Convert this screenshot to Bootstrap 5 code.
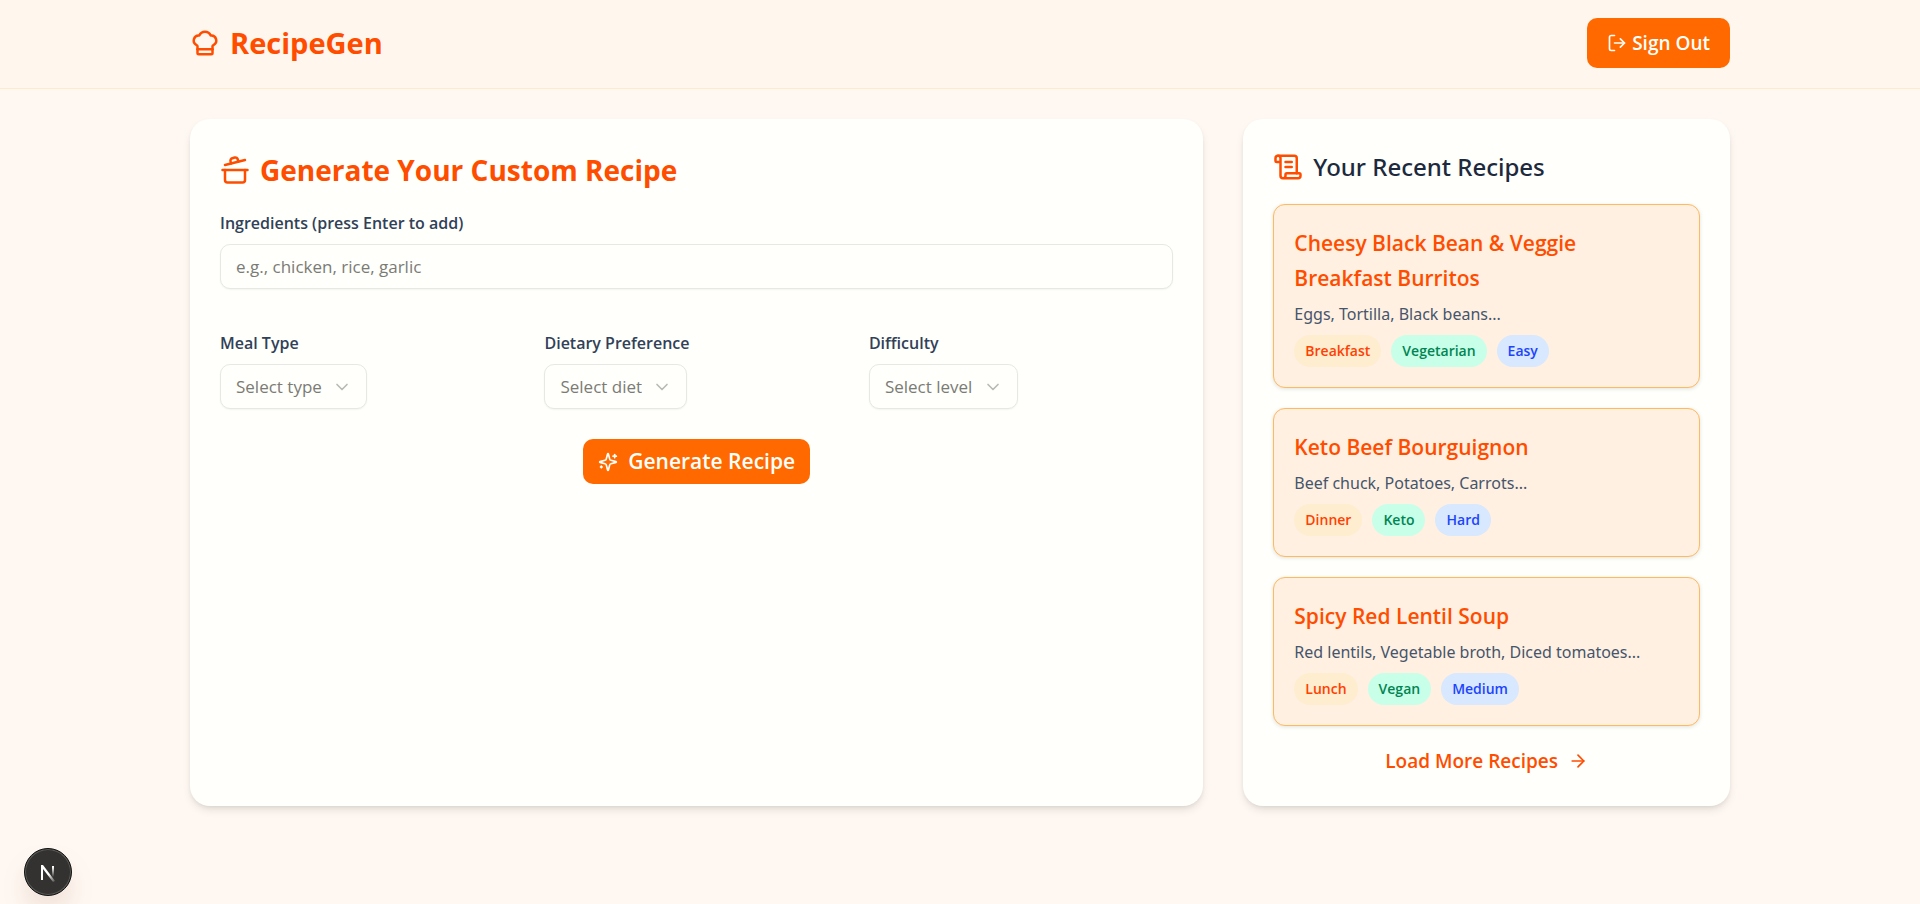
<!DOCTYPE html>
<html lang="en">
<head>
<meta charset="utf-8">
<meta name="viewport" content="width=device-width, initial-scale=1">
<title>RecipeGen</title>
<link href="https://cdn.jsdelivr.net/npm/bootstrap@5.3.0/dist/css/bootstrap.min.css" rel="stylesheet">
<style>
  :root { --flame: #ff4d00; --tangerine: #ff6900; --paper: #fffffb; --slate: #314158; }
  body { font-family: "Open Sans", "Noto Sans", sans-serif; background: #fff8f2; color: #1d293d; }
  svg { flex: none; fill: none; stroke: currentColor; stroke-width: 2; stroke-linecap: round; stroke-linejoin: round; }
  .page-width { max-width: 1580px; padding-inline: 20px; }
  .site-header { background: #fff6ed; border-bottom: 1px solid #ffebcc; padding-block: 18px 20px; }
  .brand { color: var(--flame); font-size: 29px; font-weight: 700; line-height: 42px; gap: 10px; }
  .btn-flame { --bs-btn-color: var(--paper); --bs-btn-bg: var(--tangerine); --bs-btn-hover-color: #fff; --bs-btn-hover-bg: var(--flame);
    --bs-btn-active-bg: var(--flame); --bs-btn-active-color: #fff; --bs-btn-border-width: 0; --bs-btn-border-radius: 10px; font-weight: 600; }
  .btn-signout { font-size: 19px; line-height: 30px; padding: 10px 20px; gap: 5px; }
  .btn-generate { font-size: 21px; line-height: 31px; padding: 7px 15px; gap: 10px; }
  .layout-row { --bs-gutter-x: 40px; row-gap: 30px; padding-top: 30px; }
  .panel { background: var(--paper); border-radius: 20px; padding: 30px; height: 100%;
    box-shadow: 0 5px 8px -1px rgba(0,0,0,.1), 0 2px 5px -2px rgba(0,0,0,.1); }
  .panel-title { color: var(--flame); font-size: 28px; font-weight: 700; line-height: 42px; margin-bottom: 19px; gap: 10px; }
  .side-title { font-family: "Noto Sans", "Open Sans", sans-serif; font-size: 24px; font-weight: 500; line-height: 35px; margin-bottom: 20px; gap: 10px; }
  .side-title svg { color: var(--flame); }
  .form-label { color: var(--slate); font-size: 16px; font-weight: 600; line-height: 26px; margin-bottom: 8px; display: block; }
  .field { background-color: var(--paper); border: 1px solid #e7e7e3; border-radius: 10px; height: 45px; font-size: 17px;
    color: #7b7b76; padding: 0 15px; box-shadow: 0 1px 2px rgba(0,0,0,.05); }
  .field::placeholder { color: #7b7b76; }
  .pick { width: auto; padding-right: 44px; appearance: none; background-repeat: no-repeat; background-position: right 14px center;
    background-image: url("data:image/svg+xml,%3Csvg xmlns='http://www.w3.org/2000/svg' width='20' height='20' viewBox='0 0 24 24' fill='none' stroke='%23b9b9b5' stroke-width='2' stroke-linecap='round' stroke-linejoin='round'%3E%3Cpath d='m6 9 6 6 6-6'/%3E%3C/svg%3E"); }
  .choices { --bs-gutter-x: 20px; row-gap: 20px; margin-bottom: 30px; }
  .ingredients { margin-bottom: 41px; }
  .recipes { gap: 20px; margin-bottom: 20px; }
  .recipe { background: #fff0e1; border: 1px solid #ffb95f; border-radius: 12px; padding: 21px 20px 19px; box-shadow: 0 1px 4px rgba(0,0,0,.12); }
  .recipe h3 { color: var(--flame); font-size: 21px; font-weight: 600; line-height: 35px; margin-bottom: 5px; }
  .recipe p { color: #45556c; font-family: "Noto Sans", "Open Sans", sans-serif; font-size: 16px; line-height: 26px; margin-bottom: 8px; }
  .tags { gap: 10px; }
  .tag { font-size: 14px; font-weight: 600; line-height: 22px; padding: 5px 11px; border-radius: 16px; }
  .tag-meal { background: #ffedd0; color: #ff4000; }
  .tag-diet { background: #c8ffe9; color: #008552; }
  .tag-level { background: #d7e8ff; color: #1c44fc; }
  .recipe .tags { margin-bottom: 1px; }
  .load-more { color: var(--flame); font-size: 19px; font-weight: 600; line-height: 30px; gap: 10px; }
  .dev-badge { left: 24px; bottom: 8px; width: 48px; height: 48px; border-radius: 50%; border: 1px solid #111; background: #333230; color: #fff;
    box-shadow: inset 0 0 0 1px #5b5b59, 0 16px 32px -8px rgba(120,40,0,.24); }
</style>
</head>
<body class="min-vh-100">
<header class="site-header">
  <div class="container-fluid page-width d-flex justify-content-between align-items-center">
    <a href="#" class="brand d-flex align-items-center text-decoration-none">
      <svg width="30" height="30" viewBox="0 0 24 24" aria-hidden="true"><path d="M17 21a1 1 0 0 0 1-1v-5.35c0-.457.316-.844.727-1.041a4 4 0 0 0-2.134-7.589 5 5 0 0 0-9.186 0 4 4 0 0 0-2.134 7.588c.411.198.727.585.727 1.041V20a1 1 0 0 0 1 1Z"/><path d="M6 17h12"/></svg>
      <span>RecipeGen</span>
    </a>
    <button type="button" class="btn btn-flame btn-signout d-flex align-items-center">
      <svg width="20" height="20" viewBox="0 0 24 24" aria-hidden="true"><path d="m16 17 5-5-5-5"/><path d="M21 12H9"/><path d="M9 21H5a2 2 0 0 1-2-2V5a2 2 0 0 1 2-2h4"/></svg>
      <span>Sign Out</span>
    </button>
  </div>
</header>
<main class="container-fluid page-width pb-4">
  <div class="row layout-row">
    <section class="col-12 col-lg-8">
      <form class="panel">
        <h2 class="panel-title d-flex align-items-center">
          <svg width="30" height="30" viewBox="0 0 24 24" aria-hidden="true"><path d="M2 12h20"/><path d="M20 12v8a2 2 0 0 1-2 2H6a2 2 0 0 1-2-2v-8"/><path d="m4 8 16-4"/><path d="m8.86 6.78-.45-1.81a2 2 0 0 1 1.45-2.43l1.94-.48a2 2 0 0 1 2.43 1.46l.45 1.8"/></svg>
          <span>Generate Your Custom Recipe</span>
        </h2>
        <div class="ingredients">
          <label class="form-label" for="ingredients">Ingredients (press Enter to add)</label>
          <input type="text" id="ingredients" class="field w-100 d-block" placeholder="e.g., chicken, rice, garlic">
        </div>
        <div class="row choices">
          <div class="col-12 col-md-4">
            <label class="form-label" for="meal">Meal Type</label>
            <select id="meal" class="field pick d-block"><option>Select type</option><option>Breakfast</option><option>Lunch</option><option>Dinner</option></select>
          </div>
          <div class="col-12 col-md-4">
            <label class="form-label" for="diet">Dietary Preference</label>
            <select id="diet" class="field pick d-block"><option>Select diet</option><option>Vegan</option><option>Keto</option></select>
          </div>
          <div class="col-12 col-md-4">
            <label class="form-label" for="level">Difficulty</label>
            <select id="level" class="field pick d-block"><option>Select level</option><option>Easy</option><option>Medium</option><option>Hard</option></select>
          </div>
        </div>
        <button type="button" class="btn btn-flame btn-generate d-flex align-items-center mx-auto">
          <svg width="20" height="20" viewBox="0 0 24 24" aria-hidden="true"><path d="M9.937 15.5A2 2 0 0 0 8.5 14.063l-6.135-1.582a.5.5 0 0 1 0-.962L8.5 9.936A2 2 0 0 0 9.937 8.5l1.582-6.135a.5.5 0 0 1 .963 0L14.063 8.5A2 2 0 0 0 15.5 9.937l6.135 1.581a.5.5 0 0 1 0 .964L15.5 14.063a2 2 0 0 0-1.437 1.437l-1.582 6.135a.5.5 0 0 1-.963 0z"/><path d="M20 3v4"/><path d="M22 5h-4"/><path d="M4 17v2"/><path d="M5 18H3"/></svg>
          <span>Generate Recipe</span>
        </button>
      </form>
    </section>
    <aside class="col-12 col-lg-4">
      <div class="panel">
        <h2 class="side-title d-flex align-items-center">
          <svg width="30" height="30" viewBox="0 0 24 24" aria-hidden="true"><path d="M15 12h-5"/><path d="M15 8h-5"/><path d="M19 17V5a2 2 0 0 0-2-2H4"/><path d="M8 21h12a2 2 0 0 0 2-2v-1a1 1 0 0 0-1-1H11a1 1 0 0 0-1 1v1a2 2 0 1 1-4 0V5a2 2 0 1 0-4 0v2a1 1 0 0 0 1 1h3"/></svg>
          <span>Your Recent Recipes</span>
        </h2>
        <div class="recipes d-flex flex-column">
          <article class="recipe">
            <h3>Cheesy Black Bean &amp; Veggie Breakfast Burritos</h3>
            <p>Eggs, Tortilla, Black beans...</p>
            <div class="tags d-flex flex-wrap"><span class="tag tag-meal">Breakfast</span><span class="tag tag-diet">Vegetarian</span><span class="tag tag-level">Easy</span></div>
          </article>
          <article class="recipe">
            <h3>Keto Beef Bourguignon</h3>
            <p>Beef chuck, Potatoes, Carrots...</p>
            <div class="tags d-flex flex-wrap"><span class="tag tag-meal">Dinner</span><span class="tag tag-diet">Keto</span><span class="tag tag-level">Hard</span></div>
          </article>
          <article class="recipe">
            <h3>Spicy Red Lentil Soup</h3>
            <p>Red lentils, Vegetable broth, Diced tomatoes...</p>
            <div class="tags d-flex flex-wrap"><span class="tag tag-meal">Lunch</span><span class="tag tag-diet">Vegan</span><span class="tag tag-level">Medium</span></div>
          </article>
        </div>
        <a href="#" class="load-more d-flex align-items-center justify-content-center text-decoration-none">
          <span>Load More Recipes</span>
          <svg width="20" height="20" viewBox="0 0 24 24" aria-hidden="true"><path d="M5 12h14"/><path d="m12 5 7 7-7 7"/></svg>
        </a>
      </div>
    </aside>
  </div>
</main>
<button type="button" class="dev-badge position-fixed d-flex align-items-center justify-content-center p-0" aria-label="Open developer tools">
  <svg width="20" height="20" viewBox="0 0 20 20" aria-hidden="true"><defs><linearGradient id="fadeA" x1="11" y1="12" x2="18" y2="21" gradientUnits="userSpaceOnUse"><stop stop-color="#fff"/><stop offset="1" stop-color="#fff" stop-opacity="0"/></linearGradient><linearGradient id="fadeB" x1="15" y1="5" x2="15" y2="15" gradientUnits="userSpaceOnUse"><stop stop-color="#fff"/><stop offset="1" stop-color="#fff" stop-opacity="0"/></linearGradient></defs><path d="M3 18V3h2L17 19l-2 1L5 7v11z" fill="url(#fadeA)" stroke="none"/><path d="M15 4v11" stroke="url(#fadeB)" stroke-linecap="butt"/></svg>
</button>
<script src="https://cdn.jsdelivr.net/npm/bootstrap@5.3.0/dist/js/bootstrap.bundle.min.js"></script>
</body>
</html>
